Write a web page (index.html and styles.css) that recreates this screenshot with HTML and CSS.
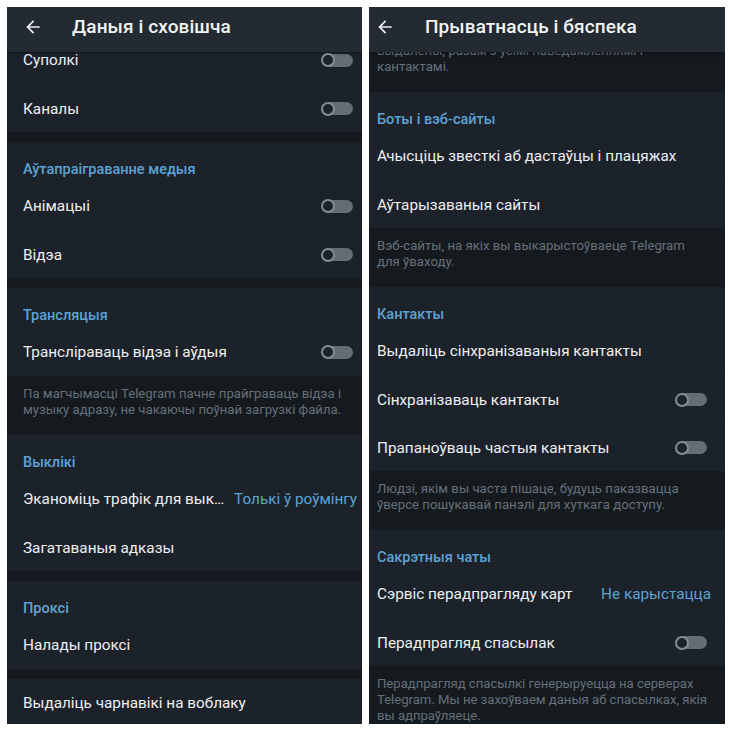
FILE: index.html
```html
<!DOCTYPE html>
<html lang="be">
<head>
<meta charset="utf-8">
<title>Налады</title>
<link rel="stylesheet" href="styles.css">
</head>
<body>
<div class="screen">
  <section class="panel panel--left">
    <header class="appbar">
      <svg class="back" viewBox="0 0 24 24" width="20" height="20"><path d="M20 11H7.83l5.59-5.59L12 4l-8 8 8 8 1.41-1.41L7.83 13H20v-2z"/></svg>
      <h1 class="title">Даныя і сховішча</h1>
    </header>
    <div class="viewport">
      <div class="content content--left">
        <div class="group">
          <div class="row"><span class="label">Суполкі</span><span class="switch"></span></div>
          <div class="row"><span class="label">Каналы</span><span class="switch"></span></div>
        </div>
        <div class="gap"></div>
        <div class="group">
          <div class="group-title">Аўтапраіграванне медыя</div>
          <div class="row"><span class="label">Анімацыі</span><span class="switch"></span></div>
          <div class="row"><span class="label">Відэа</span><span class="switch"></span></div>
        </div>
        <div class="gap"></div>
        <div class="group">
          <div class="group-title">Трансляцыя</div>
          <div class="row"><span class="label">Трансліраваць відэа і аўдыя</span><span class="switch"></span></div>
        </div>
        <div class="info">Па магчымасці Telegram пачне прайграваць відэа і музыку адразу, не чакаючы поўнай загрузкі файла.</div>
        <div class="group">
          <div class="group-title">Выклікі</div>
          <div class="row row--value-tight"><span class="label">Эканоміць трафік для выклікаў</span><span class="value">Толькі ў роўмінгу</span></div>
          <div class="row"><span class="label">Загатаваныя адказы</span></div>
        </div>
        <div class="gap"></div>
        <div class="group">
          <div class="group-title">Проксі</div>
          <div class="row"><span class="label">Налады проксі</span></div>
        </div>
        <div class="gap"></div>
        <div class="group">
          <div class="row"><span class="label">Выдаліць чарнавікі на воблаку</span></div>
        </div>
      </div>
    </div>
  </section>

  <section class="panel panel--right">
    <header class="appbar">
      <svg class="back" viewBox="0 0 24 24" width="20" height="20"><path d="M20 11H7.83l5.59-5.59L12 4l-8 8 8 8 1.41-1.41L7.83 13H20v-2z"/></svg>
      <h1 class="title">Прыватнасць і бяспека</h1>
    </header>
    <div class="viewport">
      <div class="content content--right">
        <div class="info">выдалены, разам з усімі паведамленнямі і кантактамі.</div>
        <div class="group">
          <div class="group-title">Боты і вэб-сайты</div>
          <div class="row"><span class="label">Ачысціць звесткі аб дастаўцы і плацяжах</span></div>
          <div class="row"><span class="label">Аўтарызаваныя сайты</span></div>
        </div>
        <div class="info">Вэб-сайты, на якіх вы выкарыстоўваеце Telegram для&nbsp;ўваходу.</div>
        <div class="group">
          <div class="group-title">Кантакты</div>
          <div class="row"><span class="label">Выдаліць сінхранізаваныя кантакты</span></div>
          <div class="row"><span class="label">Сінхранізаваць кантакты</span><span class="switch"></span></div>
          <div class="row"><span class="label">Прапаноўваць частыя кантакты</span><span class="switch"></span></div>
        </div>
        <div class="info">Людзі, якім вы часта пішаце, будуць паказвацца ўверсе пошукавай панэлі для хуткага доступу.</div>
        <div class="group">
          <div class="group-title">Сакрэтныя чаты</div>
          <div class="row"><span class="label">Сэрвіс перадпрагляду карт</span><span class="value">Не карыстацца</span></div>
          <div class="row"><span class="label">Перадпрагляд спасылак</span><span class="switch"></span></div>
        </div>
        <div class="info info--wide">Перадпрагляд спасылкі генерыруецца на серверах Telegram. Мы не захоўваем даныя аб спасылках, якія вы адпраўляеце.</div>
      </div>
    </div>
  </section>
</div>
</body>
</html>
```
FILE: styles.css
```css
*, *::before, *::after { box-sizing: border-box; }

html, body {
  margin: 0;
  background: #ffffff;
}

body {
  font-family: Roboto, "Noto Sans", "Liberation Sans", sans-serif;
  -webkit-font-smoothing: antialiased;
}

.screen {
  display: flex;
  gap: 7px;
  padding: 7px;
  height: 732px;
}

.panel {
  --pl: 16px;
  --pr: 9px;
  --hl: 16px;
  --tl: 65px;
  --ir: 9px;
  display: flex;
  flex-direction: column;
  height: 717px;
  overflow: hidden;
  background: #1c222a;
  color: #eef0f2;
}

.panel--left { width: 355px; }

.panel--right {
  width: 356px;
  --pl: 8px;
  --pr: 18px;
  --hl: 6px;
  --tl: 56px;
  --ir: 9px;
}

.appbar {
  flex: none;
  height: 45px;
  display: flex;
  align-items: flex-start;
  background: #232a32;
  padding-left: var(--hl);
  padding-top: 2px;
  box-shadow: 0 1px 3px rgba(0, 0, 0, 0.35);
  position: relative;
  z-index: 1;
}

.back {
  fill: #eef0f2;
  margin-top: 8px;
  flex: none;
}

.title {
  margin: 0 0 0 calc(var(--tl) - var(--hl) - 20px);
  font-size: 19px;
  font-weight: 500;
  line-height: 36px;
  letter-spacing: 0.1px;
  color: #f2f4f6;
  white-space: nowrap;
}

.viewport {
  flex: 1;
  overflow: hidden;
}

.content--left { margin-top: -16px; }
.content--right { margin-top: -19px; }

.group {
  background: #1c222a;
}

.group-title {
  height: 40px;
  padding: 18px var(--pr) 0 var(--pl);
  font-size: 14.5px;
  line-height: 20px;
  font-weight: 500;
  color: #5ea2d3;
}

.row {
  height: 48px;
  margin-left: var(--pl);
  padding-right: var(--pr);
  display: flex;
  align-items: center;
  font-size: 15.3px;
  color: #eef0f2;
  white-space: nowrap;
}

.row + .row {
  border-top: 1px solid #181d23;
}

.label {
  flex: 1;
  min-width: 0;
  overflow: hidden;
  text-overflow: ellipsis;
}

.value {
  flex: none;
  color: #5ea2d3;
  margin-left: 1px;
}

.panel--right .value { margin-right: -4px; }

.row--value-tight { padding-right: 5px; }

.switch {
  flex: none;
  width: 32px;
  height: 14px;
  display: flex;
  align-items: center;
}

.switch::before {
  content: "";
  flex: none;
  width: 14px;
  height: 14px;
  border-radius: 50%;
  border: 2px solid #848d95;
  background: #1c222a;
  position: relative;
  z-index: 1;
}

.switch::after {
  content: "";
  flex: none;
  width: 29px;
  height: 13px;
  margin-left: -11px;
  border-radius: 6.5px;
  background: #646d75;
}

.gap {
  height: 10px;
  background: #151a1f;
}

.info {
  background: #151a1f;
  padding: 10px var(--ir) 17px var(--pl);
  font-size: 13.2px;
  line-height: 16px;
  color: #65707a;
}

.info--wide {
  padding-right: 2px;
  letter-spacing: -0.05px;
}
```
